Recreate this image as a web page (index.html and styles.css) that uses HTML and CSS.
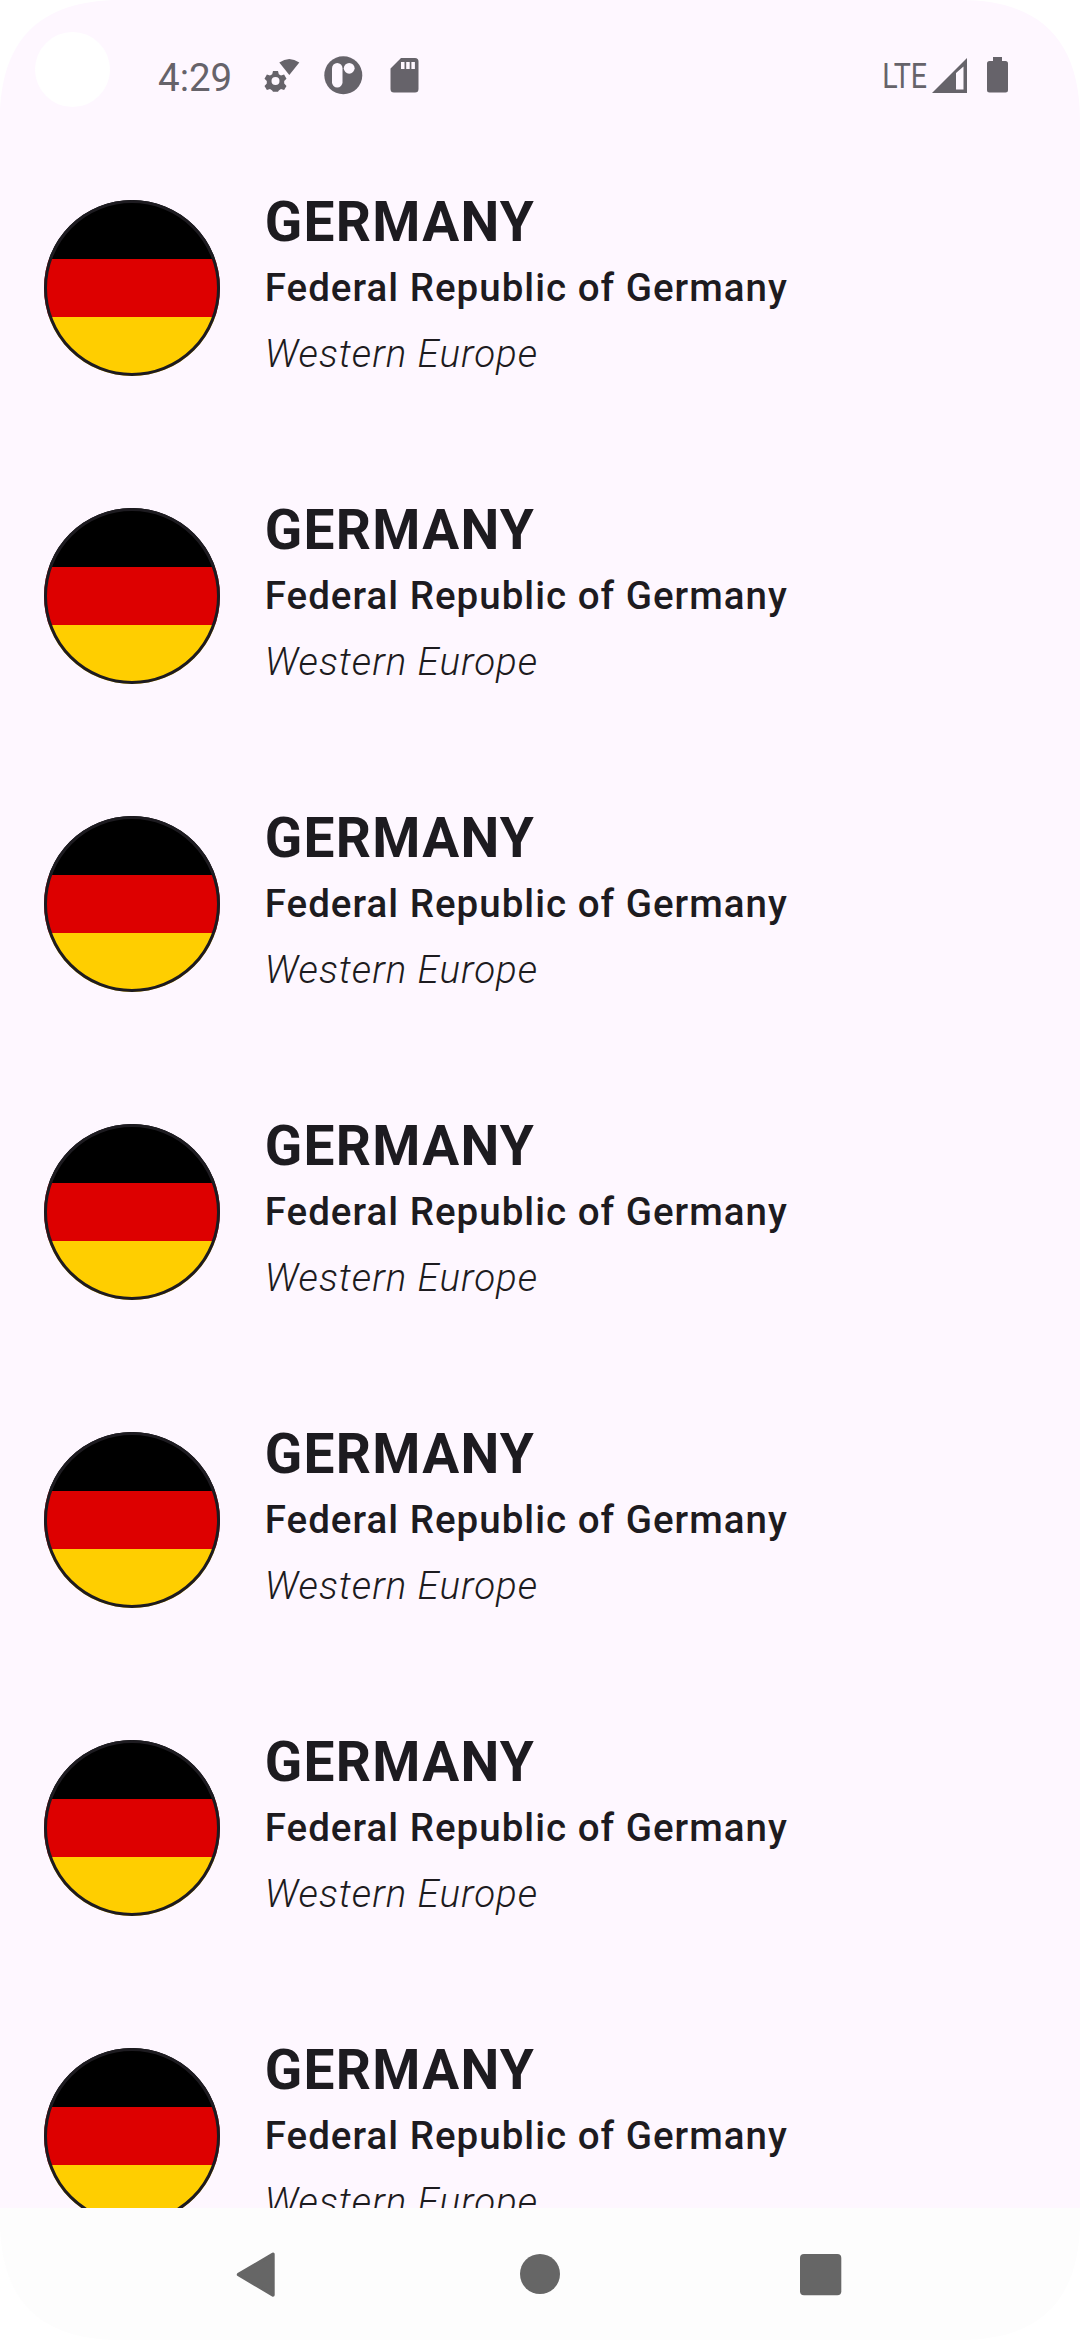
FILE: index.html
```html
<!DOCTYPE html>
<html lang="en">
<head>
<meta charset="utf-8">
<title>Countries</title>
<link rel="stylesheet" href="styles.css">
</head>
<body>
<div class="screen">
  <header class="status">
    <div class="camera"></div>
    <span class="time">4:29</span>
    <svg class="status-left" width="160" height="48" viewBox="260 51 160 48" fill="#66636a">
      <path d="M279.300 62.500Q289.300 55.500 299.300 62.500L289.300 75Z"/>
      <path fill-rule="evenodd" d="M273 71h5l.8 3.300 2.200 1.300 3.100-1 2.400 4.200-2.300 2.300v2.500l2.300 2.300-2.400 4.200-3.100-1-2.200 1.300-.8 1.300h-5l-.8-1.300-2.200-1.300-3.100 1-2.400-4.200 2.300-2.300v-2.500l-2.300-2.300 2.400-4.200 3.100 1 2.200-1.300ZM275.500 77a4 4 0 1 0 0 8a4 4 0 1 0 0-8Z"/>
      <circle cx="343.300" cy="75.200" r="19"/>
      <g fill="#fef7ff"><rect x="332" y="63" width="10.500" height="24.500" rx="5.250"/><circle cx="349.200" cy="68.300" r="5.400"/></g>
      <path fill-rule="evenodd" d="M401 58h14a3.500 3.500 0 0 1 3.500 3.500v27.500a3.500 3.500 0 0 1-3.500 3.500h-21a3.500 3.500 0 0 1-3.500-3.500v-20.500ZM401 62v7h3.500v-7ZM406.200 62v7h3.500v-7ZM411.400 62v7h3.500v-7Z"/>
    </svg>
    <span class="network">LTE</span>
    <svg class="status-right" width="80" height="40" viewBox="930 55 80 40" fill="#66636a">
      <path fill-rule="evenodd" d="M932 93L967 58V93ZM956 73V89.500H963.500V66.500Z"/>
      <path d="M993 57h9v4h3.500a2.500 2.500 0 0 1 2.500 2.500v26.500a2.500 2.500 0 0 1-2.500 2.500h-16a2.500 2.500 0 0 1-2.500-2.500v-26.500a2.500 2.500 0 0 1 2.500-2.500h3.500Z"/>
    </svg>
  </header>
  <main class="list">
    <article class="row"><div class="flag"></div><div class="info"><h2 class="name">GERMANY</h2><p class="official">Federal Republic of Germany</p><p class="region">Western Europe</p></div></article>
    <article class="row"><div class="flag"></div><div class="info"><h2 class="name">GERMANY</h2><p class="official">Federal Republic of Germany</p><p class="region">Western Europe</p></div></article>
    <article class="row"><div class="flag"></div><div class="info"><h2 class="name">GERMANY</h2><p class="official">Federal Republic of Germany</p><p class="region">Western Europe</p></div></article>
    <article class="row"><div class="flag"></div><div class="info"><h2 class="name">GERMANY</h2><p class="official">Federal Republic of Germany</p><p class="region">Western Europe</p></div></article>
    <article class="row"><div class="flag"></div><div class="info"><h2 class="name">GERMANY</h2><p class="official">Federal Republic of Germany</p><p class="region">Western Europe</p></div></article>
    <article class="row"><div class="flag"></div><div class="info"><h2 class="name">GERMANY</h2><p class="official">Federal Republic of Germany</p><p class="region">Western Europe</p></div></article>
    <article class="row"><div class="flag"></div><div class="info"><h2 class="name">GERMANY</h2><p class="official">Federal Republic of Germany</p><p class="region">Western Europe</p></div></article>
  </main>
  <nav class="nav">
    <svg width="48" height="48" viewBox="0 0 48 48"><path d="M2.500 24.500L37 4.200V45Z" fill="#666" stroke="#666" stroke-width="3.400" stroke-linejoin="round"/></svg>
    <svg width="48" height="48" viewBox="0 0 48 48"><circle cx="24" cy="24" r="20" fill="#666"/></svg>
    <svg width="48" height="48" viewBox="0 0 48 48"><rect x="4" y="4" width="41.300" height="41.300" rx="4" fill="#666"/></svg>
  </nav>
  <svg class="corner corner-tl" width="120" height="120"><path d="M0 0V120C0 40 40 0 120 0Z"/></svg>
  <svg class="corner corner-tr" width="120" height="120"><path d="M0 0V120C0 40 40 0 120 0Z"/></svg>
  <svg class="corner corner-bl" width="120" height="120"><path d="M0 0V120C0 40 40 0 120 0Z"/></svg>
  <svg class="corner corner-br" width="120" height="120"><path d="M0 0V120C0 40 40 0 120 0Z"/></svg>
</div>
</body>
</html>
```
FILE: styles.css
```css
* { box-sizing: border-box; }
body { margin: 0; background: #fff; font-family: Roboto, sans-serif; color: #1d1b20; }
.screen { position: relative; width: 1080px; height: 2340px; display: flex; flex-direction: column; overflow: hidden; background: #fef7ff; }
.status { flex: none; height: 134px; display: flex; align-items: flex-start; padding: 32px 70px 0 35px; color: #66636a; }
.camera { width: 75px; height: 75px; border-radius: 50%; background: #fff; }
.time { margin-left: 48px; padding-top: 23px; width: 102px; font-size: 38.5px; line-height: 46px; white-space: nowrap; }
.status-left { margin-top: 19px; }
.network { margin-left: auto; padding-top: 24px; margin-right: 3px; font-size: 34.5px; line-height: 40px; transform: scaleX(0.83); transform-origin: right; }
.status-right { margin-top: 23px; }
.list { flex: 1; min-height: 0; overflow: hidden; }
.row { display: flex; align-items: center; gap: 44px; padding: 55px 44px; }
.flag { position: relative; width: 176px; height: 176px; border-radius: 50%; background: linear-gradient(#000 0 58.67px, #d00 58.67px 117px, #ffce00 117px); }
.flag::after { content: ""; position: absolute; inset: 0; border: 3px solid #1d1b20; border-radius: 50%; }
.info { padding-left: 0.7px; }
.name, .official, .region { margin: 0; line-height: 66px; white-space: nowrap; }
.name { font-size: 55px; font-weight: 700; letter-spacing: 1.3px; }
.official { font-size: 38.5px; font-weight: 500; letter-spacing: 1.02px; }
.region { font-size: 38.5px; font-weight: 300; font-style: italic; letter-spacing: 1px; }
.nav { flex: none; height: 132px; display: flex; justify-content: center; align-items: center; gap: 232px; background: #fdfdfd; }
.corner { position: absolute; fill: #fff; }
.corner-tl { left: 0; top: 0; }
.corner-tr { right: 0; top: 0; transform: scaleX(-1); }
.corner-bl { left: 0; bottom: 0; transform: scaleY(-1); }
.corner-br { right: 0; bottom: 0; transform: scale(-1); }
```
